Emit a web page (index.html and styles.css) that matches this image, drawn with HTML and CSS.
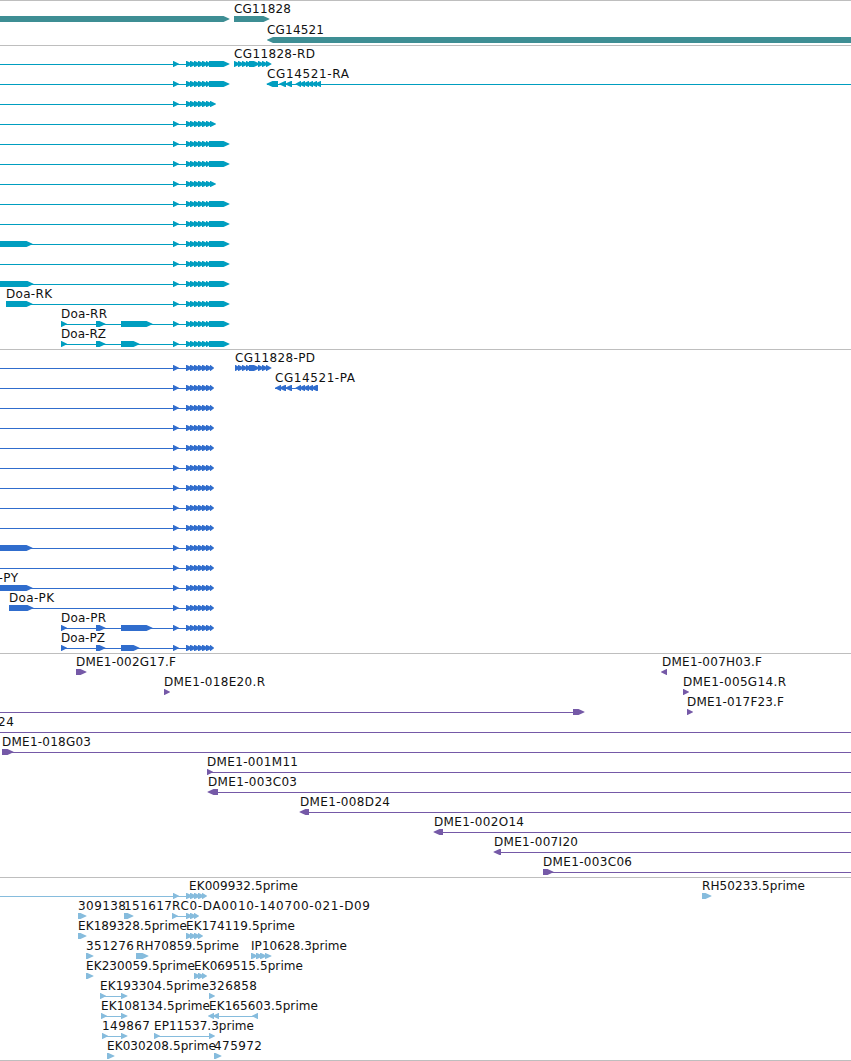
FILE: index.html
```html
<!DOCTYPE html>
<html lang="en">
  <head>
    <meta charset="UTF-8" />
    <meta name="viewport" content="width=device-width, initial-scale=1.0" />
    <title>Genome Browser</title>
    <link rel="stylesheet" href="styles.css">
  </head>
  <body>
    <main class="browser">
      <section class="track gene"><svg id="gene" height="44"></svg></section>
      <section class="track transcript"><svg id="transcript" height="303"></svg></section>
      <section class="track cds"><svg id="cds" height="303"></svg></section>
      <section class="track bac"><svg id="bac" height="223"></svg></section>
      <section class="track est"><svg id="est" height="182"></svg></section>
    </main>
    <script src="script.js"></script>
  </body>
</html>
```
FILE: styles.css
```css
* {
  margin: 0;
  padding: 0;
  box-sizing: border-box;
}

body {
  background: white;
  overflow: hidden;
}

.browser {
  display: flex;
  flex-direction: column;
  width: 851px;
  border-top: 1px solid #bebebe;
}

.track {
  border-bottom: 1px solid #bebebe;
}

.track svg {
  display: block;
  width: 100%;
  overflow: hidden;
  fill: currentColor;
}

.track text {
  font-family: "DejaVu Sans", sans-serif;
  font-size: 12px;
  fill: #111;
}

.gene {
  color: #3e8e94;
}

.transcript {
  color: #009ec0;
}

.cds {
  color: #306dcd;
}

.bac {
  color: #7559a7;
}

.est {
  color: #86bcdd;
}
```
FILE: script.js
```js
const END = 851;

function add(svg, tag, attrs) {
  const el = document.createElementNS("http://www.w3.org/2000/svg", tag);
  for (const key in attrs) {
    el.setAttribute(key, attrs[key]);
  }
  svg.appendChild(el);
  return el;
}

// feature: { row, labels: [[text, x, width]], line: [from, to], blocks: [[from, to]] }
// a block with from > to points left
function draw(id, features, pitch = 20) {
  const svg = document.getElementById(id);
  features.forEach((f) => {
    const y = 15 + f.row * pitch;
    if (f.line) {
      add(svg, "rect", { x: f.line[0], y: y + 3, width: f.line[1] - f.line[0], height: 1 });
    }
    (f.blocks || []).forEach(([from, to]) => {
      const dir = to > from ? 1 : -1;
      const tip = Math.min(Math.abs(to - from) - 0.5, 6) * dir;
      add(svg, "polygon", {
        points: `${from},${y} ${to - tip},${y} ${to},${y + 2.7} ${to},${y + 3.3} ${to - tip},${y + 6} ${from},${y + 6}`,
      });
    });
    (f.labels || []).forEach(([text, x, width]) => {
      const t = add(svg, "text", { x: x, y: y - 3, textLength: width });
      t.textContent = text;
    });
  });
}

// run of small exons, one every 4px
function exons(from, to) {
  const list = [];
  for (let x = from; x + 5 <= to + 1; x += 4) {
    list.push([x, Math.min(x + 6.8, to)]);
  }
  return list;
}

const first = [173, 179];
const shortTail = [first, ...exons(186, 216)];
const longTail = [first, ...exons(186, 211), [209, 229.5]];
const cdsTail = [first, ...exons(186, 214)];
const cg11828 = [[234, 240.5], [238, 244.5], [242, 248.5], [246, 252], [249, 260], [258, 264.5], [262, 268.5], [266, 271.5]];
const leftRun = [[301, 295.5], [305, 298.5], [309, 302.5], [313, 306.5], [317, 310.5], [321, 314.5]];

draw("gene", [
  { row: 0, blocks: [[-10, 229.5]] },
  { row: 0, labels: [["CG11828", 234, 57]], blocks: [[234, 269.5]] },
  { row: 1, labels: [["CG14521", 267, 57]], blocks: [[860, 267]] },
], 21);

// transcripts
const rna = [];
for (let i = 0; i < 12; i++) {
  const short = [2, 3, 6].includes(i);
  const blocks = [...(short ? shortTail : longTail)];
  if (i === 9) blocks.push([-10, 32.5]);
  if (i === 11) blocks.push([-10, 33.5]);
  rna.push({ row: i, line: [0, 210], blocks: blocks });
}
rna.push(
  { row: 0, labels: [["CG11828-RD", 234, 81]], line: [234, 270], blocks: cg11828 },
  { row: 1, labels: [["CG14521-RA", 267, 82]], line: [267, END], blocks: [[278, 266.5], [286, 279], [292, 285], ...leftRun] },
  { row: 12, labels: [["Doa-RK", 6, 46]], line: [6, 210], blocks: [[6, 32.5], ...longTail] },
  { row: 13, labels: [["Doa-RR", 61, 46]], line: [61, 210], blocks: [[61, 67], [96, 105.5], [121, 152.5], ...longTail] },
  { row: 14, labels: [["Doa-RZ", 61, 45]], line: [61, 210], blocks: [[61, 67], [96, 105.5], [121, 139.5], ...longTail] },
);
draw("transcript", rna);

// coding sequences
const cds = [];
for (let i = 0; i < 12; i++) {
  const blocks = [...cdsTail];
  if (i === 9 || i === 11) blocks.push([-10, 32.5]);
  cds.push({ row: i, line: [0, 210], blocks: blocks });
}
cds.push(
  { row: 0, labels: [["CG11828-PD", 235, 80]], line: [235, 270], blocks: [[235, 240.5], ...cg11828.slice(1)] },
  { row: 1, labels: [["CG14521-PA", 275, 80]], line: [275, 318], blocks: [[281, 275], [286, 279], [292, 285], ...leftRun.slice(0, 5), [318, 313]] },
  { row: 11, labels: [["Doa-PY", -27, 45]] },
  { row: 12, labels: [["Doa-PK", 9, 45]], line: [9, 210], blocks: [[9, 33.5], ...cdsTail] },
  { row: 13, labels: [["Doa-PR", 61, 45]], line: [61, 210], blocks: [[61, 67], [96, 105.5], [121, 152.5], ...cdsTail] },
  { row: 14, labels: [["Doa-PZ", 61, 44]], line: [61, 210], blocks: [[61, 67], [96, 105.5], [121, 139.5], ...cdsTail] },
);
draw("cds", cds);

// BAC ends and clones
draw("bac", [
  { row: 0, labels: [["DME1-002G17.F", 76, 100]], blocks: [[76, 86.5]] },
  { row: 0, labels: [["DME1-007H03.F", 662, 100]], blocks: [[667, 661]] },
  { row: 1, labels: [["DME1-018E20.R", 164, 101]], blocks: [[164, 170]] },
  { row: 1, labels: [["DME1-005G14.R", 683, 103]], blocks: [[683, 689]] },
  { row: 2, line: [0, 574], blocks: [[573, 584.5]] },
  { row: 2, labels: [["DME1-017F23.F", 687, 97]], blocks: [[687, 693]] },
  { row: 3, labels: [["24", -2, 16]], line: [0, END] },
  { row: 4, labels: [["DME1-018G03", 2, 89]], line: [2, END], blocks: [[2, 13.5]] },
  { row: 5, labels: [["DME1-001M11", 207, 91]], line: [207, END], blocks: [[207, 213]] },
  { row: 6, labels: [["DME1-003C03", 208, 89]], line: [210, END], blocks: [[218, 207.5]] },
  { row: 7, labels: [["DME1-008D24", 300, 90]], line: [302, END], blocks: [[309, 299.5]] },
  { row: 8, labels: [["DME1-002O14", 434, 90]], line: [436, END], blocks: [[443, 433.5]] },
  { row: 9, labels: [["DME1-007I20", 494, 84]], line: [496, END], blocks: [[501, 493.5]] },
  { row: 10, labels: [["DME1-003C06", 543, 89]], line: [543, END], blocks: [[543, 553.5]] },
]);

// ESTs
draw("est", [
  { row: 0, labels: [["EK009932.5prime", 189, 109]], line: [0, 203], blocks: [first, ...exons(186, 207)] },
  { row: 0, labels: [["RH50233.5prime", 702, 103]], blocks: [[702, 711.5]] },
  { row: 1, labels: [["309138", 78, 48]], blocks: [[78, 86.5]] },
  { row: 1, labels: [["151617", 124, 48]], blocks: [[124, 133.5]] },
  { row: 1, labels: [["RC0-DA0010-140700-021-D09", 172, 198]], line: [172, 198], blocks: [[172, 178], ...exons(186, 199)] },
  { row: 2, labels: [["EK189328.5prime", 78, 109]], blocks: [[78, 86.5]] },
  { row: 2, labels: [["EK174119.5prime", 186, 109]], blocks: exons(186, 203) },
  { row: 3, labels: [["351276", 86, 48]], blocks: [[86, 93.5]] },
  { row: 3, labels: [["RH70859.5prime", 136, 103]], blocks: [[136, 148.5]] },
  { row: 3, labels: [["IP10628.3prime", 251, 96]], line: [251, 268], blocks: [[251, 258], [256, 263], [260, 267], [265, 271.5]] },
  { row: 4, labels: [["EK230059.5prime", 86, 109]], blocks: [[86, 93.5]] },
  { row: 4, labels: [["EK069515.5prime", 194, 109]], blocks: exons(194, 207) },
  { row: 5, labels: [["EK193304.5prime", 100, 109]], line: [100, 126], blocks: [[100, 106], [121, 127.5]] },
  { row: 5, labels: [["326858", 209, 48]], blocks: [[209, 215]] },
  { row: 6, labels: [["EK108134.5prime", 101, 109]], line: [101, 126], blocks: [[101, 107], [121, 127.5]] },
  { row: 6, labels: [["EK165603.5prime", 209, 109]], line: [211, 257], blocks: [[214, 208], [219, 212.5], [258, 252]] },
  { row: 7, labels: [["149867", 102, 48]], line: [102, 126], blocks: [[102, 108], [121, 127.5]] },
  { row: 7, labels: [["EP11537.3prime", 154, 100]], line: [154, 212], blocks: [[154, 160], [209, 215]] },
  { row: 8, labels: [["EK030208.5prime", 107, 109]], blocks: [[107, 114.5]] },
  { row: 8, labels: [["475972", 214, 48]], blocks: [[214, 221.5]] },
]);
```
